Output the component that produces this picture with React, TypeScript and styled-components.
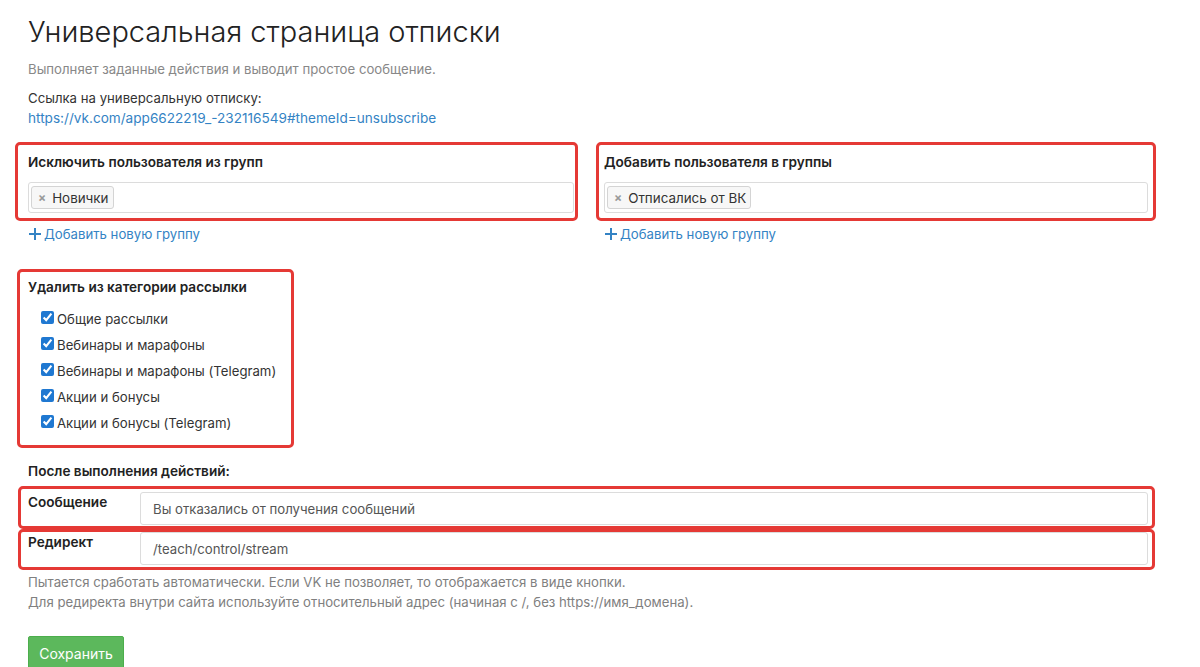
import React from 'react';
import styled, { createGlobalStyle } from 'styled-components';

const GlobalStyle = createGlobalStyle`
    body {
        margin: 0;
        background: #FFFFFF;
        font-family: "Inter", "Noto Sans", sans-serif;
        font-size: 13.2px;
        line-height: 20px;
        color: #333333;
    }
`;

const Page = styled.div`
    width: 1120px;
    padding: 12px 0 0 28px;
`;

const Title = styled.h1`
    margin: 0;
    font-size: 29px;
    line-height: 40px;
    font-weight: 300;
    color: #222222;
`;

const Lead = styled.p`
    margin: 7px 0 0;
    font-size: 13.2px;
    color: #888888;
`;

const LinkBlock = styled.div`
    margin-top: 9px;
    font-size: 13.2px;
`;

const Link = styled.a`
    color: #3483c4;
    font-size: 13.6px;
    text-decoration: none;
`;

const Columns = styled.div`
    display: grid;
    grid-template-columns: 546px 544px;
    column-gap: 30px;
    margin-top: 14px;
`;

// red annotation frame around a block; offsets say how far it sticks out of the content
const Marked = styled.div<{ $left: number; $right: number; $top?: number; $bottom?: number; $fit?: boolean }>`
    border: 3px solid #e53935;
    border-radius: 5px;
    margin: 0 -${({ $right }) => $right}px 0 -${({ $left }) => $left}px;
    padding: ${({ $top }) => $top ?? 7}px ${({ $right }) => $right - 3}px ${({ $bottom }) => $bottom ?? 5}px ${({ $left }) => $left - 3}px;
    width: ${({ $fit }) => ($fit ? 'fit-content' : 'auto')};
`;

const FieldLabel = styled.div`
    font-weight: 600;
    font-size: 13.6px;
    color: #222222;
    line-height: 20px;
`;

const TagInput = styled.div`
    margin-top: 10px;
    height: 31px;
    border: 1px solid #dcdcdc;
    border-radius: 3px;
    display: flex;
    align-items: center;
    padding: 0 2px;
    box-sizing: border-box;
`;

const Tag = styled.span`
    display: inline-flex;
    align-items: center;
    gap: 6px;
    height: 21px;
    padding: 0 4px 0 6px;
    border: 1px solid #d4d4d4;
    border-radius: 3px;
    background: #f7f7f7;
    font-size: 13.4px;
    color: #333333;
`;

const TagRemove = styled.span`
    font-size: 12px;
    font-weight: 700;
    color: #999999;
`;

const AddLink = styled.a`
    display: inline-flex;
    align-items: center;
    gap: 2px;
    margin-top: 3px;
    color: #3483c4;
    font-size: 13.2px;
    text-decoration: none;
`;

const Categories = styled.div`
    margin-top: 23px;
`;

const CheckList = styled.div`
    display: flex;
    flex-direction: column;
    gap: 6px;
    margin-top: 12px;
    padding-left: 13px;
`;

const CheckRow = styled.label`
    display: flex;
    align-items: center;
    gap: 3px;
    color: #333333;
    line-height: 20px;
`;

const Check = styled.input`
    width: 13px;
    height: 13px;
    margin: 0 0 3px;
    accent-color: #1f78d1;
`;

const AfterTitle = styled(FieldLabel)`
    margin-top: 13px;
`;

const FormRows = styled.div`
    margin-top: 5px;
`;

const FormRow = styled.div`
    display: grid;
    grid-template-columns: 112px 1fr;
    align-items: start;
`;

const RowLabel = styled.div`
    font-weight: 600;
    font-size: 13.6px;
    color: #222222;
    line-height: 20px;
`;

const TextInput = styled.div`
    height: 33px;
    border: 1px solid #dcdcdc;
    border-radius: 3px;
    box-sizing: border-box;
    display: flex;
    align-items: center;
    padding: 0 12px;
    color: #555555;
`;

const Help = styled.div`
    margin-top: 2px;
    font-size: 13.2px;
    color: #808080;
`;

const SaveButton = styled.button`
    margin-top: 24px;
    width: 96px;
    height: 34px;
    border: 1px solid #4cae4c;
    border-radius: 2px;
    background: #5cb85c;
    color: #FFFFFF;
    font-family: inherit;
    font-size: 14px;
    cursor: pointer;
`;

const PlusIcon = () => (
    <svg width="14" height="14" viewBox="0 0 14 14">
        <path d="M7 1v12M1 7h12" stroke="#3483c4" strokeWidth="2" />
    </svg>
);

const categories = [
    'Общие рассылки',
    'Вебинары и марафоны',
    'Вебинары и марафоны (Telegram)',
    'Акции и бонусы',
    'Акции и бонусы (Telegram)',
];

const App = (): JSX.Element => {
    return (
        <>
            <GlobalStyle />
            <Page>
                <Title>Универсальная страница отписки</Title>
                <Lead>Выполняет заданные действия и выводит простое сообщение.</Lead>
                <LinkBlock>
                    <div>Ссылка на универсальную отписку:</div>
                    <Link href="#">https://vk.com/app6622219_-232116549#themeId=unsubscribe</Link>
                </LinkBlock>

                <Columns>
                    <div>
                        <Marked $left={13} $right={4}>
                            <FieldLabel>Исключить пользователя из групп</FieldLabel>
                            <TagInput>
                                <Tag><TagRemove>×</TagRemove>Новички</Tag>
                            </TagInput>
                        </Marked>
                        <AddLink href="#"><PlusIcon />Добавить новую группу</AddLink>
                    </div>
                    <div>
                        <Marked $left={8} $right={8}>
                            <FieldLabel>Добавить пользователя в группы</FieldLabel>
                            <TagInput>
                                <Tag><TagRemove>×</TagRemove>Отписались от ВК</Tag>
                            </TagInput>
                        </Marked>
                        <AddLink href="#"><PlusIcon />Добавить новую группу</AddLink>
                    </div>
                </Columns>

                <Categories>
                    <Marked $left={11} $right={18} $top={5} $bottom={12} $fit>
                        <FieldLabel>Удалить из категории рассылки</FieldLabel>
                        <CheckList>
                            {categories.map((name) => (
                                <CheckRow key={name}>
                                    <Check type="checkbox" defaultChecked />
                                    {name}
                                </CheckRow>
                            ))}
                        </CheckList>
                    </Marked>
                </Categories>

                <AfterTitle>После выполнения действий:</AfterTitle>
                <FormRows>
                    <Marked $left={10} $right={7} $top={3} $bottom={1}>
                        <FormRow>
                            <RowLabel>Сообщение</RowLabel>
                            <TextInput>Вы отказались от получения сообщений</TextInput>
                        </FormRow>
                    </Marked>
                    <Marked $left={10} $right={7} $top={0} $bottom={2}>
                        <FormRow>
                            <RowLabel>Редирект</RowLabel>
                            <TextInput>/teach/control/stream</TextInput>
                        </FormRow>
                    </Marked>
                </FormRows>
                <Help>
                    Пытается сработать автоматически. Если VK не позволяет, то отображается в виде кнопки.
                    <br />
                    Для редиректа внутри сайта используйте относительный адрес (начиная с /, без https://имя_домена).
                </Help>
                <SaveButton>Сохранить</SaveButton>
            </Page>
        </>
    );
};

export default App;
